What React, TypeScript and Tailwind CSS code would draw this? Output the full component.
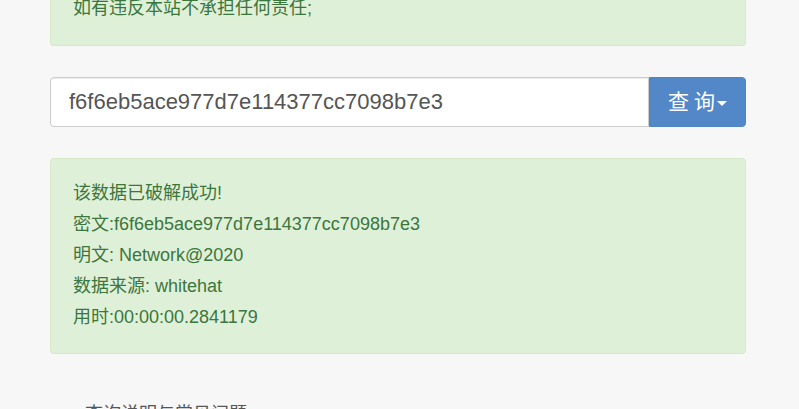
export default function App() {
  const lines = [
    "该数据已破解成功!",
    "密文:f6f6eb5ace977d7e114377cc7098b7e3",
    "明文: Network@2020",
    "数据来源: whitehat",
    "用时:00:00:00.2841179",
  ];

  return (
    <div
      className="h-[409px] w-full overflow-hidden bg-[#f7f7f7] pl-[50px] pr-[53px]"
      style={{ fontFamily: '"Liberation Sans", "Noto Sans CJK SC", sans-serif' }}
    >
      {/* top notice, mostly scrolled off */}
      <div className="mt-[-37px] rounded-b-[4px] border border-t-0 border-[#d6e9c6] bg-[#dff0d8] px-[22px] pt-[30px] pb-[22px] text-[18px] leading-[30px] text-[#3c763d]">
        如有违反本站不承担任何责任;
      </div>

      {/* search */}
      <div className="mt-[31px] flex h-[50px]">
        <input
          className="h-full min-w-0 flex-1 rounded-l-[4px] border border-[#cccccc] bg-white px-[18px] text-[22px] text-[#555555] shadow-[inset_0_1px_1px_rgba(0,0,0,0.075)] outline-none"
          defaultValue="f6f6eb5ace977d7e114377cc7098b7e3"
        />
        <button className="flex h-full w-[97px] items-center justify-center rounded-r-[4px] border border-[#4e85c4] bg-[#5288c8] text-[21px] text-white">
          <span className="tracking-[5px]">查询</span>
          <span className="ml-[-3px] mt-[2px] h-0 w-0 border-x-[5px] border-t-[5px] border-x-transparent border-t-white" />
        </button>
      </div>

      {/* result */}
      <div className="mt-[31px] rounded-[4px] border border-[#d6e9c6] bg-[#dff0d8] px-[22px] pt-[19px] pb-[20px] text-[18px] leading-[31px] text-[#3c763d]">
        {lines.map((l) => (
          <div key={l}>{l}</div>
        ))}
      </div>

      <div className="mt-[47px] pl-[35px] text-[18px] text-[#555555]">查询说明与常见问题</div>
    </div>
  );
}
